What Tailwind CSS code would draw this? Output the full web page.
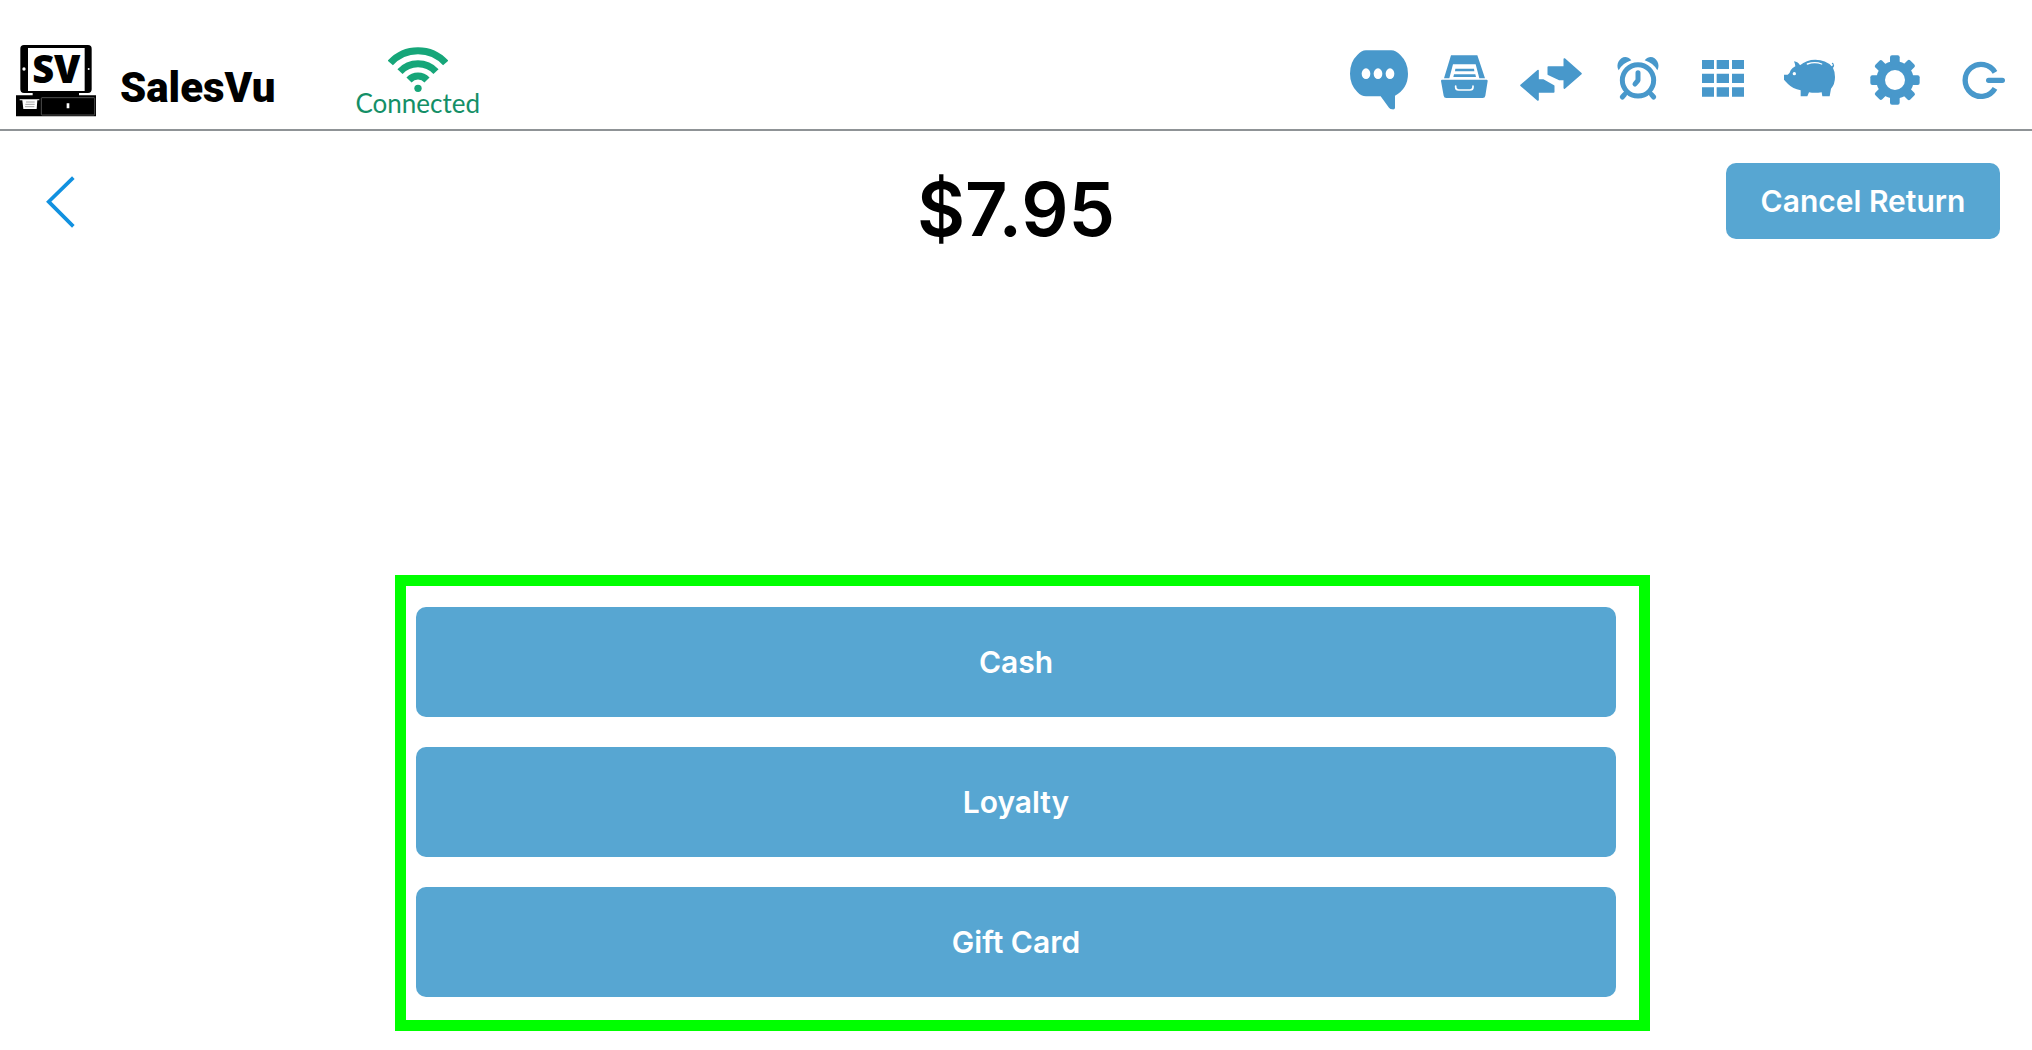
<!DOCTYPE html>
<html lang="en">
<head>
    <meta charset="UTF-8">
    <meta name="viewport" content="width=device-width, initial-scale=1.0">
    <title>SalesVu - Return</title>
    <script src="https://cdn.jsdelivr.net/npm/@tailwindcss/browser@4"></script>
</head>
<body class="min-h-screen bg-white text-black font-['Inter',sans-serif]">
    <header class="flex h-[131px] items-start justify-between border-b-2 border-[#8f9396] pl-4 pr-[17px]">
        <div class="flex pt-[45px]">
            <a href="#" class="flex gap-6">
                <svg class="h-[72px] w-20 overflow-visible" viewBox="48 44 240 216" aria-hidden="true">
                    <path fill-rule="evenodd" d="M72 44h192q11 0 11 11v122q0 11-11 11H72q-11 0-11-11V55q0-11 11-11zM84 53v129h170V53z"/>
                    <path d="M98 187h139v8h51v63H48v-63h50z"/>
                    <circle cx="72" cy="116" r="5" fill="#fff"/>
                    <circle cx="266" cy="116" r="3" fill="#fff"/>
                    <rect x="124" y="202" width="160" height="52" rx="2" fill="none" stroke="#777" stroke-width="2"/>
                    <path fill="#fff" d="M59 207h59v3h-6l-2 26H70l-3-26h-8zM200 219h8v15h-8z"/>
                    <path stroke="#777" stroke-width="2" d="M78 215h26M76 222h28M75 229h28"/>
                    <text x="169" y="158" text-anchor="middle" font-family="Open Sans, sans-serif" font-weight="800" font-size="114">SV</text>
                </svg>
                <span class="pt-[18px] font-['Roboto',sans-serif] text-[42px] leading-[50px] font-black">SalesVu</span>
            </a>
            <div class="ml-20 flex flex-col items-center">
                <svg class="mt-[2px] h-[46px] w-[60px]" viewBox="177 51 180 138" fill="none" stroke="#16a679" stroke-width="21" aria-hidden="true">
                    <path d="M184 99A112 112 0 0 1 350 99M213 125A74 74 0 0 1 321 125M240 150A37 37 0 0 1 294 150"/>
                    <circle cx="267" cy="175" r="11" fill="#16a679" stroke="none"/>
                </svg>
                <span class="-mt-1 font-['Lato',sans-serif] text-[26px] leading-7 text-[#148f67]">Connected</span>
            </div>
        </div>
        <nav class="flex gap-[22px] pt-12 text-[#4898cb]">
            <button type="button" aria-label="Messages">
                <svg class="size-16 overflow-visible" viewBox="57 39 192 192" fill="currentColor">
                    <path d="M108 46h76q14 0 27 14 23 22 23 56 0 44-39 66v36q0 6-8 5-6 0-10-5l-25-34h-44q-14 0-26-13-22-22-22-55 0-35 22-56 12-14 26-14z"/>
                    <g fill="#fff"><ellipse cx="108" cy="116" rx="13" ry="16"/><ellipse cx="144" cy="116" rx="13" ry="16"/><ellipse cx="180" cy="116" rx="13" ry="16"/></g>
                </svg>
            </button>
            <button type="button" aria-label="Drawer">
                <svg class="size-16 overflow-visible" viewBox="315 39 192 192" fill="currentColor">
                    <path fill-rule="evenodd" d="M363 61h79l23 69H342zM369 88l-11 42h90l-11-42z"/>
                    <path d="M376 101h56l1 8h-58zM372 118h64l2 8h-68z"/>
                    <path d="M336 134h134q3 0 3 4l-7 44q-1 7-8 7H349q-7 0-8-7l-8-44q0-4 3-4z"/>
                    <path d="M377 153v4q0 8 9 8h34q9 0 9-8v-4" fill="none" stroke="#fff" stroke-width="5" stroke-linecap="round"/>
                </svg>
            </button>
            <button type="button" aria-label="Transfer">
                <svg class="size-16 overflow-visible" viewBox="573 39 192 192" fill="currentColor" stroke="currentColor" stroke-width="5" stroke-linejoin="round">
                    <path d="M573 151l51-44v28h15l32 18v18h-47v24z"/>
                    <path d="M753 116l-50 43v-26h-16l-32-15V96h48V72z"/>
                </svg>
            </button>
            <button type="button" aria-label="Time clock">
                <svg class="size-16 overflow-visible" viewBox="51 39 192 192" fill="currentColor">
                    <path d="M86 106C72 82 102 50 124 76Q98 84 86 106zM202 106C216 82 186 50 164 76Q190 84 202 106z"/>
                    <circle cx="144" cy="136" r="47" fill="none" stroke="currentColor" stroke-width="15"/>
                    <path d="M144 113v23l-9 11" fill="none" stroke="currentColor" stroke-width="15" stroke-linecap="round" stroke-linejoin="round"/>
                    <path d="M104 178l-7 8M184 178l7 8" stroke="currentColor" stroke-width="15" stroke-linecap="round"/>
                </svg>
            </button>
            <button type="button" aria-label="Menu grid">
                <svg class="size-16 overflow-visible" viewBox="309 39 192 192" fill="currentColor">
                    <path d="M336 75h36v27h-36zM380 75h37v27h-37zM426 75h36v27h-36zM336 116h36v28h-36zM380 116h37v28h-37zM426 116h36v28h-36zM336 157h36v28h-36zM380 157h37v28h-37zM426 157h36v28h-36z"/>
                </svg>
            </button>
            <button type="button" aria-label="Piggy bank">
                <svg class="size-16 overflow-visible" viewBox="27 39 192 192" fill="currentColor">
                    <path d="M72 79q13 2 18 12 19-17 46-17 32 0 49 20 5-2 3-6-4-2-2-5 4 0 5 4 4 6-2 12 6 11 6 27 0 22-12 35l-4 23h-22l-2-12q-21 3-38 0l-5 12H92v-18q-24-5-38-19-7-8-12-13v-15h11q7-4 9-13 5-8 14-12-1-8-4-15z"/>
                    <circle cx="73" cy="116" r="5" fill="#fff"/>
                    <path d="M112 87q23-8 43 0" fill="none" stroke="#fff" stroke-width="4" stroke-linecap="round"/>
                </svg>
            </button>
            <button type="button" aria-label="Settings">
                <svg class="size-16 overflow-visible" viewBox="285 39 192 192" fill="currentColor">
                    <circle cx="375" cy="135" r="43" fill="none" stroke="currentColor" stroke-width="26"/>
                    <g id="teeth">
                        <rect x="360" y="61" width="29" height="30" rx="6"/>
                        <rect x="360" y="179" width="29" height="30" rx="6"/>
                        <rect x="301" y="121" width="30" height="29" rx="6"/>
                        <rect x="419" y="121" width="30" height="29" rx="6"/>
                    </g>
                    <use href="#teeth" transform="rotate(45 375 135)"/>
                </svg>
            </button>
            <button type="button" aria-label="Log out">
                <svg class="size-16 overflow-visible" viewBox="543 39 192 192" fill="none" stroke="currentColor" stroke-width="16">
                    <path d="M675 112A48 48 0 1 0 675 160"/>
                    <path d="M656 136h41" stroke-linecap="round"/>
                </svg>
            </button>
        </nav>
    </header>

    <main class="px-8 pt-8 pb-[53px]">
        <div class="grid grid-cols-3 items-start">
            <button type="button" aria-label="Back" class="justify-self-start pt-3 pl-3">
                <svg class="h-[54px] w-8" viewBox="132 78 96 162" fill="none" stroke="#1191e0" stroke-width="11">
                    <path d="M220 86L146 158L220 232"/>
                </svg>
            </button>
            <h1 class="pt-1 text-center text-[74px] leading-[84px] font-semibold">$7.95</h1>
            <button type="button" class="h-[76px] min-w-[274px] justify-self-end rounded-[10px] bg-[#57a6d2] px-8 text-[30px] font-semibold text-white">Cancel Return</button>
        </div>

        <div class="relative mx-auto mt-[356px] flex max-w-[1200px] flex-col gap-[30px] text-[30px] font-semibold text-white">
            <button type="button" class="h-[110px] rounded-[10px] bg-[#57a6d2]">Cash</button>
            <button type="button" class="h-[110px] rounded-[10px] bg-[#57a6d2]">Loyalty</button>
            <button type="button" class="h-[110px] rounded-[10px] bg-[#57a6d2]">Gift Card</button>
            <!-- highlight around the refund options -->
            <div class="pointer-events-none absolute -top-8 -right-[34px] -bottom-[34px] -left-[21px] border-[11px] border-[#00ff00]"></div>
        </div>
    </main>
</body>
</html>
